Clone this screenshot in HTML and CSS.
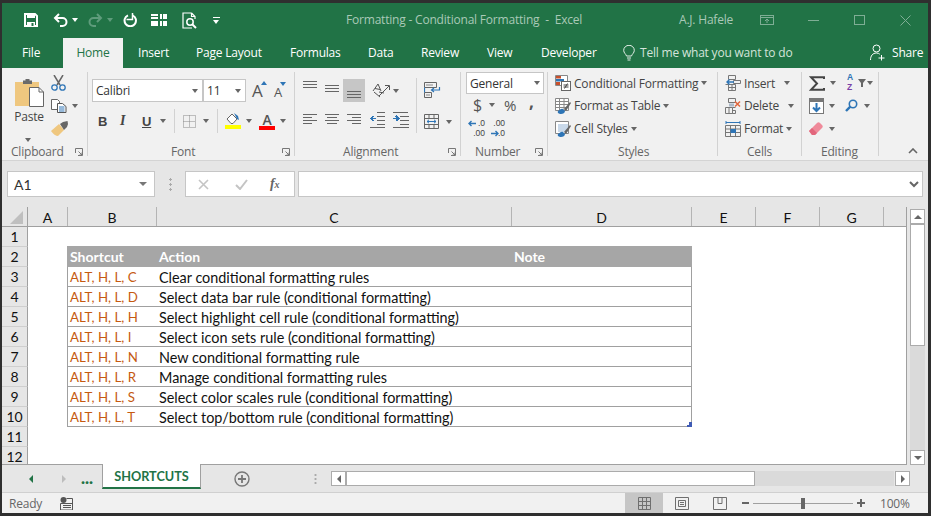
FILE: index.html
```html
<!DOCTYPE html>
<html lang="en">
<head>
<meta charset="utf-8">
<title>Formatting - Conditional Formatting - Excel</title>
<link rel="stylesheet" href="styles.css">
</head>
<body>
<div class="window">
  <header class="titlebar">
    <div class="qat">
      <svg width="14" height="14" viewBox="0 0 14 14"><path d="M1 1h10l2 2v10H1z" fill="none" stroke="#fff" stroke-width="2"/><rect x="3" y="1" width="8" height="4" fill="#fff"/><rect x="3" y="9" width="8" height="5" fill="#fff"/><rect x="7.5" y="10" width="2" height="3" fill="#217346"/></svg>
      <svg width="15" height="14" viewBox="0 0 15 14"><path d="M6 1L2 5l4 4M2 5h7.500a4 4 0 0 1 0 8H7" fill="none" stroke="#fff" stroke-width="2"/></svg>
      <span class="caret white"></span>
      <svg width="15" height="14" viewBox="0 0 15 14"><path d="M9 1l4 4-4 4M13 5H5.500a4 4 0 0 0 0 8H8" fill="none" stroke="#5f9c7c" stroke-width="2"/></svg>
      <span class="caret dimgreen"></span>
      <svg width="14" height="14" viewBox="0 0 14 14"><path d="M5 2.300a5.700 5.700 0 1 0 4.500 0" fill="none" stroke="#fff" stroke-width="2"/><path d="M9.500 0v6.500H3.500" fill="none" stroke="#fff" stroke-width="1.500"/></svg>
      <svg width="16" height="12" viewBox="0 0 16 12"><path d="M0 0h7v5H0zM0 7h7v5H0zM9 0h7v5H9zM9 7h7v5H9z" fill="#fff"/><path d="M11.500 0v5M11.500 7v5M0 2.500h7" stroke="#217346"/></svg>
      <svg width="15" height="17" viewBox="0 0 15 17"><path d="M9.500 1H1v15h9M9.500 1L13 4.500V7M9.500 1v3.500H13" fill="none" stroke="#fff" stroke-width="1.200"/><circle cx="8" cy="10" r="3.200" fill="none" stroke="#fff" stroke-width="1.500"/><path d="M10.500 12.500L14 16" stroke="#fff" stroke-width="2"/></svg>
      <span class="customize"></span>
    </div>
    <div class="doc-title">Formatting - Conditional Formatting&nbsp; -&nbsp; Excel</div>
    <div class="user">A.J. Hafele</div>
    <div class="winctl">
      <svg width="14" height="10" viewBox="0 0 14 10"><rect x=".5" y=".5" width="13" height="9" fill="none" stroke="#7fae95"/><path d="M.5 2.500h13M7 8V4M5 6l2-2 2 2" fill="none" stroke="#7fae95"/></svg>
      <svg width="11" height="10" viewBox="0 0 11 10"><path d="M0 5.500h11" stroke="#7fae95"/></svg>
      <svg width="11" height="10" viewBox="0 0 11 10"><rect x=".5" y=".5" width="10" height="9" fill="none" stroke="#7fae95"/></svg>
      <svg width="11" height="11" viewBox="0 0 11 11"><path d="M.5.500l10 10M10.500.500l-10 10" stroke="#7fae95"/></svg>
    </div>
  </header>

  <nav class="tabs">
    <span class="tab">File</span>
    <span class="tab active">Home</span>
    <span class="tab">Insert</span>
    <span class="tab">Page Layout</span>
    <span class="tab">Formulas</span>
    <span class="tab">Data</span>
    <span class="tab">Review</span>
    <span class="tab">View</span>
    <span class="tab">Developer</span>
    <span class="tab tell">
      <svg width="12" height="16" viewBox="0 0 12 16"><path d="M3.500 11C3 9 .7 8 .7 5.300a5.300 5 0 0 1 10.600 0C11.300 8 9 9 8.500 11zM4 13h4M4.500 15h3" fill="none" stroke="#e4efe8"/></svg>
      <span class="tell-text">Tell me what you want to do</span>
    </span>
    <span class="tab share">
      <svg width="15" height="17" viewBox="0 0 15 17"><circle cx="6.500" cy="4.500" r="3.500" fill="none" stroke="#fff"/><path d="M.5 16c0-4 2-7 6-7 1.500 0 2.500.5 3.300 1.200M11.500 11v5.500M8.500 14h6" fill="none" stroke="#fff"/></svg>
      <span>Share</span>
    </span>
  </nav>

  <section class="ribbon">
    <div class="group g-clip">
      <div class="body clip-body">
        <div class="paste">
          <svg width="29" height="28" viewBox="0 0 29 28"><rect x="0" y="3" width="24" height="24" fill="#efc77f"/><path d="M8 3V1.500h2.500V0h4v1.500H17V5H8z" fill="#6a6a6a"/><path d="M14.500 8.500H24l4.500 4.500v14.500h-14z" fill="#fff" stroke="#666"/><path d="M24 8.500V13h4.500" fill="none" stroke="#666"/></svg>
          <span class="paste-label">Paste</span>
          <span class="caret"></span>
        </div>
        <div class="tri clip-tools">
          <div class="clip-row">
            <svg width="15" height="16" viewBox="0 0 15 16"><path d="M3 0l6 10M12 0L6 10" stroke="#666" stroke-width="1.500"/><circle cx="3.500" cy="12.500" r="2.700" fill="none" stroke="#2e75b6" stroke-width="1.300"/><circle cx="11.500" cy="12.500" r="2.700" fill="none" stroke="#2e75b6" stroke-width="1.300"/></svg>
          </div>
          <div class="clip-row">
            <svg width="16" height="14" viewBox="0 0 16 14"><path d="M.5.500h6l2 2v8H.5z" fill="#fff" stroke="#666"/><path d="M6.500 4.500h5l3.500 3v6H6.500z" fill="#fff" stroke="#555"/><path d="M8 8h5.500M8 10h5.500M8 12h5.500" stroke="#2e75b6"/></svg>
            <span class="caret"></span>
          </div>
          <div class="clip-row">
            <svg width="17" height="15" viewBox="0 0 17 15"><path d="M0 10L8 3l5 6-6 6c-2 0-5-2-7-5z" fill="#efc77f"/><path d="M9 3l3-2 4.500-1 .5 3-1 3-3 3z" fill="#666"/></svg>
          </div>
        </div>
      </div>
      <div class="label"><span></span><span>Clipboard</span><svg class="launch" width="8" height="8" viewBox="0 0 8 8"><path d="M.5 5V.5H7.500V7.500H3M3.500 3.500L7 7M7 4.500V7H4.500" fill="none" stroke="#777"/></svg></div>
    </div>

    <div class="group g-font">
      <div class="body font-body">
        <div class="font-row1">
          <div class="combo font-name"><span>Calibri</span><span class="caret"></span></div>
          <div class="combo font-size"><span>11</span><span class="caret"></span></div>
          <div class="grow-a big"><span>A</span><i class="tri-up"></i></div>
          <div class="grow-a small"><span>A</span><i class="tri-down"></i></div>
        </div>
        <div class="font-row2">
          <b class="fmt">B</b>
          <i class="fmt serif">I</i>
          <u class="fmt bold">U</u>
          <span class="caret"></span>
          <span class="vsep"></span>
          <svg width="13" height="13" viewBox="0 0 13 13"><path d="M.5.500h12v12H.5zM6.500.500v12M.5 6.500h12" fill="none" stroke="#888" stroke-dasharray="1 1"/></svg>
          <span class="caret"></span>
          <span class="vsep"></span>
          <svg width="16" height="18" viewBox="0 0 16 18"><path d="M2 7l5-5 5 5-4 4.500H6z" fill="#fff" stroke="#666"/><path d="M9 1l4 3 1 4-2-1z" fill="#2e75b6"/><rect y="13" width="16" height="4" fill="#ffff00"/></svg>
          <span class="caret"></span>
          <div class="color-a"><span>A</span><i></i></div>
          <span class="caret"></span>
        </div>
      </div>
      <div class="label"><span></span><span>Font</span><svg class="launch" width="8" height="8" viewBox="0 0 8 8"><path d="M.5 5V.5H7.500V7.500H3M3.500 3.500L7 7M7 4.500V7H4.500" fill="none" stroke="#777"/></svg></div>
    </div>

    <div class="group g-align">
      <div class="body align-body">
        <div class="align-left">
          <div class="align-row one">
            <svg class="ali" viewBox="0 0 14 23"><path d="M0 2.500h14M0 5.500h14M0 8.500h14"/></svg>
            <svg class="ali" viewBox="0 0 14 23"><path d="M0 6.500h14M0 9.500h14M0 12.500h14"/></svg>
            <div class="selected"><svg class="ali" viewBox="0 0 14 23"><path d="M0 12.500h14M0 15.500h14M0 18.500h14"/></svg></div>
            <svg width="20" height="17" viewBox="0 0 20 17"><path d="M2 9l5-7 3 7M4 6.500l5 1M3 10l6 5M8 10l5 1" fill="none" stroke="#555"/><path d="M8 14L18 4M14 3.500h4.500V8" fill="none" stroke="#555"/></svg>
            <span class="caret"></span>
          </div>
          <div class="align-row">
            <svg class="ali" viewBox="0 0 14 23"><path d="M0 5.500h14M0 8.500h9M0 11.500h14M0 14.500h9"/></svg>
            <svg class="ali" viewBox="0 0 14 23"><path d="M0 5.500h14M2 8.500h10M0 11.500h14M2 14.500h10"/></svg>
            <svg class="ali" viewBox="0 0 14 23"><path d="M0 5.500h14M5 8.500h9M0 11.500h14M5 14.500h9"/></svg>
            <svg class="ali wide" viewBox="0 0 16 23"><path d="M8 3.500h8M8 7.500h8M8 11.500h8M8 15.500h8M1 18.500h15"/><path d="M7 9.500H2M4.500 7L2 9.500 4.500 12" stroke="#2e75b6" stroke-width="1.500"/></svg>
            <svg class="ali wide" viewBox="0 0 16 23"><path d="M0 3.500h15M7 7.500h9M7 11.500h9M7 15.500h9M0 18.500h16"/><path d="M0 9.500h5.500M3 7l2.500 2.500L3 12" stroke="#2e75b6" stroke-width="1.500"/></svg>
          </div>
        </div>
        <span class="vsep tall"></span>
        <div class="align-right">
          <svg width="17" height="16" viewBox="0 0 17 16"><path d="M.5.500h12v5H.5zM.5 10.500h7v5H.5z" fill="none" stroke="#666"/><path d="M2 3h7M2 13h4" stroke="#888"/><path d="M.5 5.500v5M7 8h8.500v-3M15.500 8l-3 0M10 6L7.500 8l2.500 2" fill="none" stroke="#2e75b6" stroke-width="1.200"/></svg>
          <div class="merge-row">
            <svg width="15" height="15" viewBox="0 0 15 15"><path d="M.5.500h14v14H.5zM.5 4.500h14M.5 10.500h14M5 .5v4M10 .5v4M5 10.500v4M10 10.500v4" fill="none" stroke="#666"/><path d="M3 7.500h9M5 5.800L3 7.500l2 1.700M10 5.800l2 1.700-2 1.700" fill="none" stroke="#2e75b6"/></svg>
            <span class="caret"></span>
          </div>
        </div>
      </div>
      <div class="label"><span></span><span>Alignment</span><svg class="launch" width="8" height="8" viewBox="0 0 8 8"><path d="M.5 5V.5H7.500V7.500H3M3.500 3.500L7 7M7 4.500V7H4.500" fill="none" stroke="#777"/></svg></div>
    </div>

    <div class="group g-num">
      <div class="body num-body">
        <div class="combo general"><span>General</span><span class="caret"></span></div>
        <div class="num-row">
          <span class="sym dollar">$</span>
          <span class="caret"></span>
          <span class="sym percent">%</span>
          <span class="sym comma">,</span>
        </div>
        <div class="num-row dec">
          <div class="dec-ico">
            <svg class="dec-arr" width="9" height="7" viewBox="0 0 9 7"><path d="M9 3.500H2M4.500 1L2 3.500 4.500 6" fill="none" stroke="#2e75b6" stroke-width="1.400"/></svg>
            <span class="dec-a">.0</span>
            <span class="dec-b">.00</span>
          </div>
          <div class="dec-ico two">
            <span class="dec-a">.00</span>
            <svg class="dec-arr" width="9" height="7" viewBox="0 0 9 7"><path d="M0 3.500h7M4.500 1L7 3.500 4.500 6" fill="none" stroke="#2e75b6" stroke-width="1.400"/></svg>
            <span class="dec-b">.0</span>
          </div>
        </div>
      </div>
      <div class="label"><span></span><span>Number</span><svg class="launch" width="8" height="8" viewBox="0 0 8 8"><path d="M.5 5V.5H7.500V7.500H3M3.500 3.500L7 7M7 4.500V7H4.500" fill="none" stroke="#777"/></svg></div>
    </div>

    <div class="group g-styles">
      <div class="body tri list">
        <div class="item"><svg width="16" height="16" viewBox="0 0 16 16"><path d="M.5.500h12v10H.5z" fill="#fff" stroke="#888"/><path d="M1 1h5v2.500H1z" fill="#c8502c"/><path d="M1 4h8v2.500H1z" fill="#2e75b6"/><path d="M1 7h4v3H1z" fill="#c8502c"/><rect x="6.500" y="6.500" width="9" height="9" fill="#fff" stroke="#666"/><path d="M8.500 10h5M8.500 12h5M12.500 8.500l-3 5" stroke="#444"/></svg><span>Conditional Formatting</span><span class="caret near"></span></div>
        <div class="item"><svg width="16" height="16" viewBox="0 0 16 16"><path d="M.5.500h13v12H.5zM.5 3.500h13M.5 6.500h13M.5 9.500h13M4.500.5v12M9 .5v12" fill="#fff" stroke="#888"/><path d="M6 16c-2 0-4-1-3-3 2-1 3-3 5-2l2 2c0 2-2 3-4 3z" fill="#2e75b6"/><path d="M9 11l6-7 1 1-5 8z" fill="#666"/></svg><span>Format as Table</span><span class="caret near"></span></div>
        <div class="item"><svg width="16" height="16" viewBox="0 0 16 16"><path d="M.5.500h13v12H.5z" fill="#fff" stroke="#888"/><path d="M3 3h10v8H3z" fill="#c9d9ea"/><path d="M6 16c-2 0-4-1-3-3 2-1 3-3 5-2l2 2c0 2-2 3-4 3z" fill="#2e75b6"/><path d="M9 11l6-7 1 1-5 8z" fill="#666"/></svg><span>Cell Styles</span><span class="caret near"></span></div>
      </div>
      <div class="label"><span></span><span>Styles</span><span></span></div>
    </div>

    <div class="group g-cells">
      <div class="body tri list">
        <div class="item"><svg width="16" height="16" viewBox="0 0 16 16"><path d="M3.500.500h7v4h-7zM3.500 9.500h7v6h-7zM.5 9.500h3v6M7 9.500v6M3.500 12.500h7M8.500 5.500h7v3h-7z" fill="none" stroke="#777"/><path d="M9 7H2M4.500 4.500L2 7l2.500 2.500" fill="none" stroke="#2e75b6" stroke-width="1.400"/></svg><span>Insert</span><span class="caret far"></span></div>
        <div class="item"><svg width="16" height="16" viewBox="0 0 16 16"><path d="M3.500.500h7v4h-7zM.5 9.500h7v6h-7zM7.500 9.500h3M7.500 12.500h3v3h-3zM4 9.500v6" fill="none" stroke="#777"/><path d="M4 5.500h5v3H4z" fill="#aab8c8"/><path d="M10 3.500l5 5M15 3.500l-5 5" stroke="#e0663c" stroke-width="1.500"/></svg><span>Delete</span><span class="caret far"></span></div>
        <div class="item"><svg width="16" height="16" viewBox="0 0 16 16"><path d="M.5 4.500h15v11H.5zM.5 8h15M.5 11.500h15M5.500 4.500v11M10.500 4.500v11" fill="none" stroke="#777"/><rect x="5.500" y="8" width="5.500" height="4" fill="#2e75b6"/><path d="M1 1.500h14M1 0v3M15 0v3" stroke="#2e75b6"/></svg><span>Format</span><span class="caret near"></span></div>
      </div>
      <div class="label"><span></span><span>Cells</span><span></span></div>
    </div>

    <div class="group g-edit">
      <div class="body tri edit-body">
        <div class="edit-row">
          <svg width="16" height="15" viewBox="0 0 16 15"><path d="M15 3V1.200H2L8 7.500 2 13.800h13V12" fill="none" stroke="#444" stroke-width="2"/></svg>
          <span class="caret"></span>
          <div class="sort"><span class="az-a">A</span><span class="az-z">Z</span></div>
          <svg width="8" height="8" viewBox="0 0 8 8"><path d="M0 0h8L5 4v4H3V4z" fill="#666"/></svg>
          <span class="caret"></span>
        </div>
        <div class="edit-row second">
          <svg width="15" height="16" viewBox="0 0 15 16"><rect x=".5" y=".5" width="14" height="15" fill="#fff" stroke="#777"/><rect x="1" y="1" width="13" height="3" fill="#777"/><path d="M7.500 5v8M4 9.500l3.500 3.500L11 9.500" fill="none" stroke="#2e75b6" stroke-width="2"/></svg>
          <span class="caret"></span>
          <svg width="13" height="13" viewBox="0 0 13 13"><circle cx="8" cy="5" r="3.700" fill="none" stroke="#2e75b6" stroke-width="1.600"/><path d="M5.300 7.700L1 12" stroke="#2e75b6" stroke-width="2.400"/></svg>
          <span class="caret"></span>
        </div>
        <div class="edit-row second">
          <svg width="14" height="13" viewBox="0 0 14 13"><path d="M0 9l8-8c1-1 2-1 3 0l2 2c1 1 1 2 0 3l-7 7H3z" fill="#ef8a9a"/><path d="M0 9l3-3 5 5-2 2H3z" fill="#e2667c"/></svg>
          <span class="caret"></span>
        </div>
      </div>
      <div class="label"><span></span><span>Editing</span><span></span></div>
    </div>

    <div class="collapse-box">
      <svg width="10" height="6" viewBox="0 0 10 6"><path d="M1 5l4-4 4 4" fill="none" stroke="#666" stroke-width="1.600"/></svg>
    </div>
  </section>

  <section class="formula">
    <div class="field namebox"><span>A1</span><span class="caret big"></span></div>
    <div class="grip"></div>
    <div class="field fbtns">
      <svg width="11" height="11" viewBox="0 0 11 11"><path d="M1 1l9 9M10 1l-9 9" stroke="#c4c4c4" stroke-width="1.600"/></svg>
      <svg width="13" height="11" viewBox="0 0 13 11"><path d="M1 6l4 4 7-9" fill="none" stroke="#c4c4c4" stroke-width="2"/></svg>
      <span class="fx">f<small>x</small></span>
    </div>
    <div class="field finput"><svg width="10" height="7" viewBox="0 0 10 7"><path d="M1 1l4 4 4-4" fill="none" stroke="#666" stroke-width="2"/></svg></div>
  </section>

  <section class="sheet-area">
    <div class="sheet">
      <div class="row colhead">
        <div class="corner"><svg width="13" height="13" viewBox="0 0 13 13"><path d="M13 0v13H0z" fill="#bfbfbf"/></svg></div>
        <div class="ch">A</div><div class="ch">B</div><div class="ch">C</div><div class="ch">D</div><div class="ch">E</div><div class="ch">F</div><div class="ch">G</div>
      </div>
      <div class="row"><div class="rh">1</div></div>
      <div class="row"><div class="rh">2</div><div class="cell th first">Shortcut</div><div class="cell th">Action</div><div class="cell th last">Note</div></div>
      <div class="row"><div class="rh">3</div><div class="cell key first">ALT, H, L, C</div><div class="cell">Clear conditional formatting rules</div><div class="cell last"></div></div>
      <div class="row"><div class="rh">4</div><div class="cell key first">ALT, H, L, D</div><div class="cell">Select data bar rule (conditional formatting)</div><div class="cell last"></div></div>
      <div class="row"><div class="rh">5</div><div class="cell key first">ALT, H, L, H</div><div class="cell">Select highlight cell rule (conditional formatting)</div><div class="cell last"></div></div>
      <div class="row"><div class="rh">6</div><div class="cell key first">ALT, H, L, I</div><div class="cell">Select icon sets rule (conditional formatting)</div><div class="cell last"></div></div>
      <div class="row"><div class="rh">7</div><div class="cell key first">ALT, H, L, N</div><div class="cell">New conditional formatting rule</div><div class="cell last"></div></div>
      <div class="row"><div class="rh">8</div><div class="cell key first">ALT, H, L, R</div><div class="cell">Manage conditional formatting rules</div><div class="cell last"></div></div>
      <div class="row"><div class="rh">9</div><div class="cell key first">ALT, H, L, S</div><div class="cell">Select color scales rule (conditional formatting)</div><div class="cell last"></div></div>
      <div class="row"><div class="rh">10</div><div class="cell key first">ALT, H, L, T</div><div class="cell">Select top/bottom rule (conditional formatting)</div><div class="cell last"><svg class="handle" width="5" height="5" viewBox="0 0 5 5"><path d="M5 0v5H0V3h2V0z" fill="#3f5bb5"/></svg></div></div>
      <div class="row"><div class="rh">11</div></div>
      <div class="row"><div class="rh">12</div></div>
    </div>
    <div class="vscroll">
      <div class="sbtn"><i class="ar up"></i></div>
      <div class="thumb"></div>
      <div class="track"></div>
      <div class="sbtn"><i class="ar down"></i></div>
    </div>
  </section>

  <section class="tabbar">
    <i class="ar left green"></i>
    <i class="ar right pale"></i>
    <b class="more">...</b>
    <div class="sheet-tab">SHORTCUTS</div>
    <svg class="plus" width="16" height="16" viewBox="0 0 16 16"><circle cx="8" cy="8" r="7" fill="none" stroke="#777" stroke-width="1.400"/><path d="M8 4v8M4 8h8" stroke="#777" stroke-width="1.800"/></svg>
    <div class="grip small"></div>
    <div class="hscroll">
      <div class="sbtn"><i class="ar left"></i></div>
      <div class="hthumb"></div>
      <div class="htrack"></div>
      <div class="sbtn"><i class="ar right"></i></div>
    </div>
  </section>

  <footer class="status">
    <span class="ready">Ready</span>
    <svg class="macro" width="13" height="13" viewBox="0 0 13 13"><circle cx="3.500" cy="3" r="3" fill="#555"/><path d="M6.500 1.500h6V13H.5V6.500h12M3 8.500h8M3 10.500h8" fill="none" stroke="#555"/></svg>
    <div class="view active-view"><svg width="13" height="13" viewBox="0 0 13 13"><path d="M.5.500h12v12H.5zM4.500.5v12M8.500.5v12M.5 4.500h12M.5 8.500h12" fill="none" stroke="#6f6f6f"/></svg></div>
    <div class="view"><svg width="14" height="13" viewBox="0 0 14 13"><path d="M.5.500h13v12H.5zM3.500 3.500h7v6h-7zM5 5.500h4M5 7.500h4" fill="none" stroke="#6f6f6f"/></svg></div>
    <div class="view"><svg width="14" height="13" viewBox="0 0 14 13"><path d="M.5.500h13v12H.5zM5 .5v6h4v-6" fill="none" stroke="#6f6f6f"/></svg></div>
    <div class="zoom">
      <span class="zminus"></span>
      <div class="zline"><span class="zthumb"></span></div>
      <span class="zplus"></span>
    </div>
    <span class="pct">100%</span>
  </footer>
</div>
</body>
</html>
```

FILE: styles.css
```css
* { box-sizing: border-box; }
html, body { margin: 0; padding: 0; }
body { width: 931px; height: 516px; overflow: hidden; background: #2b2b2b; font-family: "Open Sans", "Noto Sans", sans-serif; font-size: 12px; letter-spacing: -.2px; color: #444; }
svg { display: block; flex: none; }

.window { width: 931px; height: 516px; border-style: solid; border-color: #2f2f2f; border-width: 3px 3px 3px 2px; background: #e6e6e6; display: flex; flex-direction: column; overflow: hidden; }

/* Title bar */
.titlebar { height: 35px; flex: none; background: #217346; display: flex; align-items: center; padding-bottom: 1px; }
.qat { width: 344px; padding-left: 22px; display: grid; grid-template-columns: 29px 19px 16px 19px 16px 28px 31px 31px auto; align-items: center; justify-items: start; }
.customize { width: 7px; height: 7px; border-top: 1px solid #fff; position: relative; }
.customize::after { content: ""; display: block; margin-top: 2px; border: 3.500px solid transparent; border-top: 4px solid #fff; border-bottom: 0; width: 0; }
.doc-title { width: 333px; color: #a9c9b7; white-space: nowrap; margin-top: -2px; }
.user { width: 81px; color: #a9c9b7; white-space: nowrap; margin-top: -2px; }
.winctl { display: grid; grid-template-columns: 48px 46px 46px 11px; align-items: center; justify-items: start; }

/* Tabs */
.tabs { height: 30px; flex: none; background: #217346; display: grid; grid-template-columns: 61px 60px 58px 94px 78px 53px 66px 54px 82px 247px auto; color: #fff; }
.tab { display: flex; align-items: center; padding-left: 15px; padding-bottom: 1px; color: #fff; white-space: nowrap; }
.tab:first-child { padding-left: 20px; }
.tab.active { background: #f1f1f1; color: #217346; justify-content: center; padding-left: 0; }
.tell { gap: 5px; }
.tell-text { color: #d4e4da; }
.share { gap: 7px; }

/* Ribbon */
.ribbon { height: 93px; flex: none; background: #f1f1f1; border-bottom: 1px solid #d4d4d4; padding-top: 4px; display: flex; align-items: flex-start; }
.group { height: 84px; display: flex; flex-direction: column; border-right: 1px solid #d2d2d2; flex: none; }
.g-clip { width: 86px; }
.g-font { width: 207px; }
.g-align { width: 166px; }
.g-num { width: 87px; }
.g-styles { width: 170px; }
.g-cells { width: 84px; }
.g-edit { width: 77px; }
.body { flex: 1; min-height: 0; }
.label { height: 16px; margin-bottom: -4px; line-height: 16px; display: grid; align-items: center; padding-right: 4px; color: #666; }
.g-clip .label { grid-template-columns: 9px auto 1fr; }
.g-font .label { grid-template-columns: 83px auto 1fr; }
.g-align .label { grid-template-columns: 48px auto 1fr; }
.g-num .label { grid-template-columns: 14px auto 1fr; }
.g-styles .label { grid-template-columns: 70px auto 1fr; }
.g-cells .label { grid-template-columns: 29px auto 1fr; }
.g-edit .label { grid-template-columns: 19px auto 1fr; }
.launch { justify-self: end; }
.caret { display: block; width: 0; height: 0; border-style: solid; border-color: #666 transparent transparent; border-width: 4px 3.500px 0; flex: none; }
.caret.white { border-top-color: #fff; }
.caret.dimgreen { border-top-color: #5f9c7c; }
.tri { display: grid; grid-template-rows: 22px 23px 23px; align-content: start; }
.vsep { display: block; width: 1px; height: 24px; background: #d2d2d2; }

/* Clipboard */
.clip-body { display: flex; }
.paste { width: 49px; padding: 7px 0 0 13px; display: flex; flex-direction: column; align-items: flex-start; }
.paste-label { width: 32px; margin: 1px 0 0 -2px; text-align: center; color: #444; line-height: 18px; }
.paste .caret { margin: 12px 0 0 10px; }
.clip-row { display: flex; align-items: center; gap: 5px; }
.clip-tools { flex: 1; }

/* Font */
.font-body { padding: 7px 0 0 4px; }
.font-row1 { display: grid; grid-template-columns: 111px 44px 23px auto; height: 23px; align-items: center; }
.combo { height: 23px; background: #fff; border: 1px solid #c6c6c6; display: flex; align-items: center; justify-content: space-between; padding: 0 4px 0 3px; color: #333; }
.font-name { width: 111px; }
.font-size { width: 43px; }
.grow-a { display: flex; align-items: flex-start; color: #555; line-height: 1; margin-left: 5px; }
.grow-a.big span { font-size: 17px; font-weight: 400; }
.grow-a.small span { font-size: 13px; padding-top: 3px; }
.grow-a.small { margin-left: 4px; }
.tri-up, .tri-down { display: block; width: 0; height: 0; border-style: solid; border-color: transparent; margin: -1px 0 0 -2px; }
.tri-up { border-width: 0 3.500px 4px; border-bottom-color: #2e75b6; }
.tri-down { border-width: 4px 3.500px 0; border-top-color: #2e75b6; }
.font-row2 { margin-top: 7px; padding-left: 6px; height: 24px; display: grid; grid-template-columns: 22px 22px 18px 14px 9px 20px 14px 8px 21px 13px 21px auto; align-items: center; justify-items: start; }
.fmt { font-size: 13px; color: #444; font-style: normal; font-weight: 700; line-height: 1; font-family: "Liberation Sans", sans-serif; }
.fmt.serif { font-family: "Liberation Serif", serif; font-style: italic; font-weight: 700; font-size: 14px; }
.color-a { width: 16px; display: flex; flex-direction: column; align-items: center; }
.color-a span { font-size: 14px; line-height: 13px; font-weight: 600; color: #555; }
.color-a i { display: block; width: 16px; height: 4px; background: #ff0000; }

/* Alignment */
.align-body { display: flex; padding: 7px 0 0 8px; }
.align-left { width: 113px; }
.align-row { display: grid; grid-template-columns: 22px 22px 22px 24px 22px; height: 23px; align-items: center; justify-items: start; margin-bottom: 7px; }
.align-row.one { grid-template-columns: 22px 18px 28px 22px auto; }
.ali { width: 14px; height: 23px; fill: none; stroke: #666; shape-rendering: crispEdges; }
.ali.wide { width: 16px; }
.selected { width: 22px; height: 23px; background: #c6c6c6; display: flex; justify-content: center; }
.vsep.tall { height: 55px; margin-top: -1px; }
.align-right { margin-left: 7px; padding-top: 3px; display: flex; flex-direction: column; gap: 16px; }
.merge-row { display: flex; align-items: center; gap: 7px; }

/* Number */
.num-body { padding-left: 5px; }
.combo.general { width: 78px; height: 22px; padding: 0 3px 0 3px; }
.num-row { height: 22px; display: grid; grid-template-columns: 16px 15px 25px auto; align-items: center; justify-items: start; padding-left: 7px; }
.sym { line-height: 1; color: #555; }
.dollar { font-size: 16px; }
.percent { font-size: 15px; }
.comma { font-size: 17px; font-weight: 700; margin-top: -8px; }
.num-row.dec { height: 19px; margin-top: 3px; padding-left: 1px; grid-template-columns: 24px auto; align-items: start; }
.dec-ico { width: 18px; display: grid; grid-template-columns: 9px auto; justify-items: end; align-items: center; font-family: "Liberation Sans", sans-serif; font-size: 8.500px; line-height: 9.800px; letter-spacing: 0; color: #444; }
.dec-ico.two { width: 14px; grid-template-columns: 7px auto; }
.dec-a { grid-column: 2; grid-row: 1; }
.dec-b { grid-column: 1 / 3; grid-row: 2; }
.dec-ico.two .dec-a { grid-column: 1 / 3; }
.dec-arr { grid-column: 1; grid-row: 1; justify-self: start; }
.dec-ico.two .dec-arr { grid-row: 2; }
.dec-ico.two .dec-b { grid-column: 2; }

/* Styles & cells lists */
.list { padding-left: 7px; }
.item { display: flex; align-items: center; white-space: nowrap; color: #444; }
.item svg { margin-right: 3px; }
.caret.near { margin-left: 3px; }
.caret.far { margin-left: 9px; }

/* Editing */
.edit-body { padding-left: 7px; }
.edit-row { display: grid; grid-template-columns: 21px 15px 13px 9px auto; align-items: center; justify-items: start; }
.edit-row.second { grid-template-columns: 20px 16px 19px auto; }
.sort { display: flex; flex-direction: column; font-family: "Liberation Sans", sans-serif; font-size: 8.500px; line-height: 9.800px; font-weight: 700; letter-spacing: 0; padding-left: 2px; }
.az-a { color: #2e75b6; }
.az-z { color: #7a3fa8; }
.collapse-box { flex: 1; height: 84px; display: flex; justify-content: flex-end; align-items: flex-end; padding: 0 10px 2px 0; }

/* Formula bar */
.formula { height: 46px; flex: none; padding: 10px 5px 0 5px; display: flex; align-items: flex-start; }
.field { height: 26px; background: #fff; border: 1px solid #c6c6c6; display: flex; align-items: center; flex: none; }
.namebox { width: 148px; justify-content: space-between; padding: 0 7px 0 6px; font-family: Lato, sans-serif; font-size: 14px; letter-spacing: 0; color: #333; }
.caret.big { border-width: 4px 4px 0; border-top-color: #777; }
.grip { width: 30px; height: 14px; margin-top: 6px; background: radial-gradient(circle, #aaa 1px, transparent 1.200px) center top / 3px 5px repeat-y; flex: none; }
.fbtns { width: 110px; padding-left: 12px; gap: 26px; }
.fx { font-family: "Liberation Serif", serif; font-style: italic; font-size: 14px; color: #666; font-weight: 700; margin-left: -4px; }
.fx small { font-size: 10px; }
.finput { flex: 1; margin-left: 3px; justify-content: flex-end; padding-right: 3px; }

/* Sheet */
.sheet-area { flex: 1; min-height: 0; display: flex; }
.sheet { width: 905px; height: 258px; flex: none; background: #fff; overflow: hidden; border-right: 1px solid #a0a0a0; border-bottom: 1px solid #a0a0a0; font-family: Lato, sans-serif; font-size: 14px; letter-spacing: 0; color: #111; }
.row { display: grid; grid-template-columns: 26px 40px 89px 355px 180px 64px 64px 64px; height: 20px; }
.row.colhead { background: #e6e6e6; border-bottom: 1px solid #a0a0a0; }
.corner { display: flex; justify-content: flex-end; padding: 4px 4px 0 0; border-right: 1px solid #a0a0a0; }
.ch { display: flex; align-items: center; justify-content: center; border-right: 1px solid #b4b4b4; padding-top: 1px; }
.rh { background: #e6e6e6; border-right: 1px solid #a0a0a0; border-bottom: 1px solid #cfcfcf; display: flex; align-items: center; justify-content: center; grid-column: 1; }
.cell { border-bottom: 1px solid #a0a0a0; padding-left: 2px; font-size: 14.400px; line-height: 21px; height: 20px; white-space: nowrap; }
.cell.first { grid-column: 3; margin-left: -1px; padding-left: 2px; border-left: 1px solid #a0a0a0; }
.cell.last { border-right: 1px solid #a0a0a0; position: relative; }
.cell.th { background: #a6a6a6; color: #fff; font-size: 14px; font-weight: 700; border: 0; margin-top: -1px; line-height: 21px; height: 21px; }
.cell.th.first { padding-left: 3px; }
.cell.key { color: #c55a11; font-size: 13.300px; }
.handle { position: absolute; right: -1px; bottom: -1px; }

/* Scrollbars */
.vscroll { margin: 2px 3px 0 3px; width: 15px; display: flex; flex-direction: column; height: 256px; }
.sbtn { width: 15px; height: 15px; background: #fff; border: 1px solid #ababab; flex: none; display: flex; align-items: center; justify-content: center; }
.ar { display: block; width: 0; height: 0; border-style: solid; border-color: transparent; flex: none; }
.ar.up { border-width: 0 4px 4px; border-bottom-color: #666; }
.ar.down { border-width: 4px 4px 0; border-top-color: #666; }
.ar.left { border-width: 4px 4px 4px 0; border-right-color: #666; }
.ar.right { border-width: 4px 0 4px 4px; border-left-color: #666; }
.ar.green { border-right-color: #217346; }
.ar.pale { border-left-color: #bdbdbd; }
.thumb { height: 122px; background: #fff; border: 1px solid #ababab; flex: none; }
.track { flex: 1; background: #dadada; }

/* Sheet tab bar */
.tabbar { height: 27px; flex: none; display: flex; align-items: center; background: #e6e6e6; padding-left: 27px; font-family: Lato, sans-serif; letter-spacing: 0; }
.ar.left.green { margin-right: 29px; }
.more { margin-left: 15px; color: #217346; width: 21px; font-size: 17px; line-height: 12px; margin-top: -2px; font-weight: 900; }
.sheet-tab { align-self: flex-start; margin-top: -1px; width: 99px; height: 25px; background: #fff; border-left: 1px solid #a0a0a0; border-right: 1px solid #a0a0a0; border-bottom: 2px solid #217346; color: #217346; font-weight: 700; font-size: 12.700px; text-align: center; line-height: 24px; flex: none; }
.plus { margin-left: 33px; }
.grip.small { width: 3px; height: 12px; margin: 0 0 0 64px; background-size: 3px 4px; }
.hscroll { width: 578px; margin-left: 14px; display: flex; align-items: center; height: 15px; }
.hthumb { width: 409px; height: 15px; background: #fff; border: 1px solid #ababab; flex: none; }
.htrack { width: 139px; height: 15px; background: #dadada; flex: none; }
.hscroll .sbtn:last-child { margin-left: 1px; }

/* Status bar */
.status { height: 21px; flex: none; background: #f1f1f1; border-top: 1px solid #d0d0d0; display: flex; align-items: stretch; color: #666; padding-left: 7px; }
.ready { width: 51px; display: flex; align-items: center; }
.macro { align-self: center; }
.view { width: 38px; display: flex; align-items: center; justify-content: center; flex: none; }
.active-view { background: #c6c6c6; margin-left: 552px; }
.zoom { display: flex; align-items: center; margin-left: 3px; }
.zminus { width: 7px; height: 2px; background: #666; }
.zline { width: 100px; height: 1px; margin: 0 4px; background: #a0a0a0; position: relative; }
.zthumb { position: absolute; left: 48px; top: -5px; width: 4px; height: 11px; background: #666; }
.zplus { width: 8px; height: 8px; background: linear-gradient(#666,#666) center / 8px 2px no-repeat, linear-gradient(#666,#666) center / 2px 8px no-repeat; }
.pct { margin-left: 15px; display: flex; align-items: center; color: #666; }
```
